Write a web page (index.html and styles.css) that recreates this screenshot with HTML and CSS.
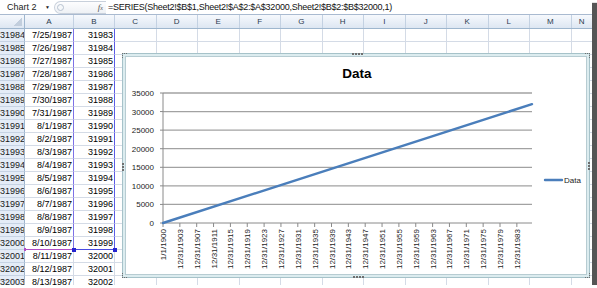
FILE: index.html
```html
<!DOCTYPE html>
<html>
<head>
<meta charset="utf-8">
<link rel="stylesheet" href="styles.css">
</head>
<body>
<div class="app">
  <div class="fbar">
    <div class="namebox"><span class="name">Chart 2</span><span class="dd">▼</span></div>
    <div class="fxbtn"><span class="knob"></span><span class="fx"><i>f</i><span class="fxx">x</span></span></div>
    <div class="formula">=SERIES(Sheet2!$B$1,Sheet2!$A$2:$A$32000,Sheet2!$B$2:$B$32000,1)</div>
  </div>
  <div class="colhdr">
    <div class="corner"><span class="tri"></span></div>
    <div class="ch ca">A</div>
    <div class="ch cb">B</div>
    <div class="ch">C</div>
    <div class="ch">D</div>
    <div class="ch">E</div>
    <div class="ch">F</div>
    <div class="ch">G</div>
    <div class="ch">H</div>
    <div class="ch">I</div>
    <div class="ch">J</div>
    <div class="ch">K</div>
    <div class="ch">L</div>
    <div class="ch">M</div>
    <div class="ch clast">N</div>
  </div>
  <div class="sheet">
    <div class="row in"><div class="rh">31984</div><div class="c a">7/25/1987</div><div class="c b">31983</div><div class="rest"></div></div>
    <div class="row in"><div class="rh">31985</div><div class="c a">7/26/1987</div><div class="c b">31984</div><div class="rest"></div></div>
    <div class="row in"><div class="rh">31986</div><div class="c a">7/27/1987</div><div class="c b">31985</div><div class="rest"></div></div>
    <div class="row in"><div class="rh">31987</div><div class="c a">7/28/1987</div><div class="c b">31986</div><div class="rest"></div></div>
    <div class="row in"><div class="rh">31988</div><div class="c a">7/29/1987</div><div class="c b">31987</div><div class="rest"></div></div>
    <div class="row in"><div class="rh">31989</div><div class="c a">7/30/1987</div><div class="c b">31988</div><div class="rest"></div></div>
    <div class="row in"><div class="rh">31990</div><div class="c a">7/31/1987</div><div class="c b">31989</div><div class="rest"></div></div>
    <div class="row in"><div class="rh">31991</div><div class="c a">8/1/1987</div><div class="c b">31990</div><div class="rest"></div></div>
    <div class="row in"><div class="rh">31992</div><div class="c a">8/2/1987</div><div class="c b">31991</div><div class="rest"></div></div>
    <div class="row in"><div class="rh">31993</div><div class="c a">8/3/1987</div><div class="c b">31992</div><div class="rest"></div></div>
    <div class="row in"><div class="rh">31994</div><div class="c a">8/4/1987</div><div class="c b">31993</div><div class="rest"></div></div>
    <div class="row in"><div class="rh">31995</div><div class="c a">8/5/1987</div><div class="c b">31994</div><div class="rest"></div></div>
    <div class="row in"><div class="rh">31996</div><div class="c a">8/6/1987</div><div class="c b">31995</div><div class="rest"></div></div>
    <div class="row in"><div class="rh">31997</div><div class="c a">8/7/1987</div><div class="c b">31996</div><div class="rest"></div></div>
    <div class="row in"><div class="rh">31998</div><div class="c a">8/8/1987</div><div class="c b">31997</div><div class="rest"></div></div>
    <div class="row in"><div class="rh">31999</div><div class="c a">8/9/1987</div><div class="c b">31998</div><div class="rest"></div></div>
    <div class="row in last"><div class="rh">32000</div><div class="c a">8/10/1987<span class="hd"></span><span class="hd hl"></span></div><div class="c b">31999<span class="hd"></span></div><div class="rest"></div></div>
    <div class="row"><div class="rh">32001</div><div class="c a">8/11/1987</div><div class="c b">32000</div><div class="rest"></div></div>
    <div class="row"><div class="rh">32002</div><div class="c a">8/12/1987</div><div class="c b">32001</div><div class="rest"></div></div>
    <div class="row"><div class="rh">32003</div><div class="c a">8/13/1987</div><div class="c b">32002</div><div class="rest"></div></div>
  </div>

  <div class="chart">
    <div class="plot">
      <svg width="460" height="217" viewBox="0 0 460 217">
        <text class="title" x="231" y="21" text-anchor="middle">Data</text>
        <g class="grid">
          <line x1="37" y1="36" x2="406" y2="36"/>
          <line x1="37" y1="54.57" x2="406" y2="54.57"/>
          <line x1="37" y1="73.14" x2="406" y2="73.14"/>
          <line x1="37" y1="91.71" x2="406" y2="91.71"/>
          <line x1="37" y1="110.29" x2="406" y2="110.29"/>
          <line x1="37" y1="128.86" x2="406" y2="128.86"/>
          <line x1="37" y1="147.43" x2="406" y2="147.43"/>
        </g>
        <g class="axis">
          <line x1="37" y1="36" x2="37" y2="166"/>
          <line x1="37" y1="166" x2="406" y2="166"/>
          <line x1="34" y1="36" x2="37" y2="36"/>
          <line x1="34" y1="54.57" x2="37" y2="54.57"/>
          <line x1="34" y1="73.14" x2="37" y2="73.14"/>
          <line x1="34" y1="91.71" x2="37" y2="91.71"/>
          <line x1="34" y1="110.29" x2="37" y2="110.29"/>
          <line x1="34" y1="128.86" x2="37" y2="128.86"/>
          <line x1="34" y1="147.43" x2="37" y2="147.43"/>
          <line x1="34" y1="166" x2="37" y2="166"/>
          <line x1="37" y1="166" x2="37" y2="170"/>
          <line x1="53.85" y1="166" x2="53.85" y2="170"/>
          <line x1="70.7" y1="166" x2="70.7" y2="170"/>
          <line x1="87.55" y1="166" x2="87.55" y2="170"/>
          <line x1="104.4" y1="166" x2="104.4" y2="170"/>
          <line x1="121.25" y1="166" x2="121.25" y2="170"/>
          <line x1="138.1" y1="166" x2="138.1" y2="170"/>
          <line x1="154.95" y1="166" x2="154.95" y2="170"/>
          <line x1="171.8" y1="166" x2="171.8" y2="170"/>
          <line x1="188.65" y1="166" x2="188.65" y2="170"/>
          <line x1="205.5" y1="166" x2="205.5" y2="170"/>
          <line x1="222.35" y1="166" x2="222.35" y2="170"/>
          <line x1="239.2" y1="166" x2="239.2" y2="170"/>
          <line x1="256.05" y1="166" x2="256.05" y2="170"/>
          <line x1="272.9" y1="166" x2="272.9" y2="170"/>
          <line x1="289.75" y1="166" x2="289.75" y2="170"/>
          <line x1="306.6" y1="166" x2="306.6" y2="170"/>
          <line x1="323.45" y1="166" x2="323.45" y2="170"/>
          <line x1="340.3" y1="166" x2="340.3" y2="170"/>
          <line x1="357.15" y1="166" x2="357.15" y2="170"/>
          <line x1="374" y1="166" x2="374" y2="170"/>
          <line x1="390.85" y1="166" x2="390.85" y2="170"/>
        </g>
        <g class="ylab" text-anchor="end">
          <text x="28" y="39">35000</text>
          <text x="28" y="57.6">30000</text>
          <text x="28" y="76.1">25000</text>
          <text x="28" y="94.7">20000</text>
          <text x="28" y="113.3">15000</text>
          <text x="28" y="131.9">10000</text>
          <text x="28" y="150.4">5000</text>
          <text x="28" y="169">0</text>
        </g>
        <g class="xlab" text-anchor="end">
          <text transform="translate(40,172) rotate(-90)">1/1/1900</text>
          <text transform="translate(56.85,172) rotate(-90)">12/31/1903</text>
          <text transform="translate(73.7,172) rotate(-90)">12/31/1907</text>
          <text transform="translate(90.55,172) rotate(-90)">12/31/1911</text>
          <text transform="translate(107.4,172) rotate(-90)">12/31/1915</text>
          <text transform="translate(124.25,172) rotate(-90)">12/31/1919</text>
          <text transform="translate(141.1,172) rotate(-90)">12/31/1923</text>
          <text transform="translate(157.95,172) rotate(-90)">12/31/1927</text>
          <text transform="translate(174.8,172) rotate(-90)">12/31/1931</text>
          <text transform="translate(191.65,172) rotate(-90)">12/31/1935</text>
          <text transform="translate(208.5,172) rotate(-90)">12/31/1939</text>
          <text transform="translate(225.35,172) rotate(-90)">12/31/1943</text>
          <text transform="translate(242.2,172) rotate(-90)">12/31/1947</text>
          <text transform="translate(259.05,172) rotate(-90)">12/31/1951</text>
          <text transform="translate(275.9,172) rotate(-90)">12/31/1955</text>
          <text transform="translate(292.75,172) rotate(-90)">12/31/1959</text>
          <text transform="translate(309.6,172) rotate(-90)">12/31/1963</text>
          <text transform="translate(326.45,172) rotate(-90)">12/31/1967</text>
          <text transform="translate(343.3,172) rotate(-90)">12/31/1971</text>
          <text transform="translate(360.15,172) rotate(-90)">12/31/1975</text>
          <text transform="translate(377,172) rotate(-90)">12/31/1979</text>
          <text transform="translate(393.85,172) rotate(-90)">12/31/1983</text>
        </g>
        <line class="series" x1="37" y1="166" x2="406" y2="47.15"/>
        <line class="series" x1="419" y1="123" x2="436" y2="123"/>
        <text class="legend" x="438" y="126">Data</text>
      </svg>
    </div>
    <span class="hdl htop"></span>
    <span class="hdl hbot"></span>
    <span class="hdl hleft"></span>
    <span class="hdl hright"></span>
    <span class="crn ctl"></span>
    <span class="crn ctr"></span>
    <span class="crn cbl"></span>
    <span class="crn cbr"></span>
  </div>
</div>
</body>
</html>
```
FILE: styles.css
```css
* { box-sizing: border-box; }
body {
  margin: 0;
  background: #fff;
  font-family: "Liberation Sans", Arial, sans-serif;
}
.app {
  position: relative;
  width: 592px;
  height: 285px;
  overflow: hidden;
  background: #fff;
  box-shadow: 5px 3px 1px #555;
}

/* formula bar */
.fbar {
  display: flex;
  align-items: center;
  height: 15px;
  border-bottom: 1px solid #a9bad0;
  background: #fff;
}
.namebox {
  width: 54px;
  display: flex;
  align-items: center;
  justify-content: space-between;
  padding: 0 4px 0 7px;
  font-size: 9px;
  color: #222;
}
.dd { font-size: 5px; color: #222; }
.fxbtn {
  width: 52px;
  height: 13px;
  border: 1px solid #c8d0db;
  border-right: 0;
  border-radius: 7px 0 0 7px;
  display: flex;
  align-items: center;
  justify-content: space-between;
  padding: 0 3px 0 2px;
  background: linear-gradient(#fdfdfe, #eef1f5);
}
.knob {
  width: 7px;
  height: 7px;
  border-radius: 50%;
  border: 1px solid #b7c2d0;
  background: #f6f8fa;
}
.fx {
  font-family: "Liberation Serif", serif;
  font-size: 9px;
  color: #555;
}
.fxx { font-size: 6px; font-style: italic; }
.formula {
  padding-left: 2px;
  font-size: 9px;
  letter-spacing: -0.25px;
  color: #111;
  white-space: nowrap;
}

/* column headers */
.colhdr {
  display: flex;
  height: 14px;
  background: linear-gradient(#f6f9fd, #dde6f2);
  border-bottom: 1px solid #9eb6ce;
}
.corner {
  flex: 0 0 25px;
  border-right: 1px solid #9eb6ce;
  display: flex;
  align-items: flex-end;
  justify-content: flex-end;
  padding: 0 2px 2px 0;
}
.tri {
  width: 9px;
  height: 9px;
  background: linear-gradient(135deg, transparent 50%, #c2cedd 50%);
}
.ch {
  flex: 0 0 41.5px;
  border-right: 1px solid #c3d1e2;
  display: flex;
  align-items: center;
  justify-content: center;
  font-size: 8px;
  color: #2b3a4f;
}
.ch.ca { flex-basis: 49px; }
.ch.cb { flex-basis: 41px; }
.ch.clast { flex: 1 1 auto; border-right: 0; }

/* rows */
.row {
  display: grid;
  grid-template-columns: 25px 49px 41px 1fr;
  height: 13px;
}
.rh {
  background: #e4ecf7;
  border-right: 1px solid #9eb6ce;
  border-bottom: 1px solid #c6d3e4;
  font-size: 9px;
  line-height: 12px;
  text-align: center;
  color: #1a1a1a;
  white-space: nowrap;
  overflow: hidden;
}
.c {
  position: relative;
  border-right: 1px solid #d4dbe6;
  border-bottom: 1px solid #d4dbe6;
  font-size: 9px;
  line-height: 12px;
  text-align: right;
  padding-right: 1px;
  color: #000;
  white-space: nowrap;
}
.rest {
  border-bottom: 1px solid #d4dbe6;
  background: repeating-linear-gradient(90deg, transparent 0 40.5px, #d4dbe6 40.5px 41.5px);
}
.in .a { border-right-color: #7d72e6; }
.in .b { border-right-color: #5b5be6; }
.last .a { border-bottom-color: #b24dc4; }
.last .b { border-bottom-color: #4a4ae0; }
.hd {
  position: absolute;
  right: -3px;
  bottom: -3px;
  width: 4px;
  height: 4px;
  background: #2424d0;
  z-index: 1;
}
.hd.hl {
  right: auto;
  left: -1px;
  bottom: -2px;
  width: 2px;
  height: 3px;
  background: #b24dc4;
}

/* chart */
.chart {
  position: absolute;
  left: 122px;
  top: 53px;
  width: 468px;
  height: 225px;
  border: 1px solid #a6c2c9;
  padding: 2px;
  background: #dcecef;
}
.plot {
  height: 100%;
  border: 1px solid #b7ccd2;
  background: #fff;
}
.plot svg { display: block; }
.title {
  font-family: "Liberation Sans", Arial, sans-serif;
  font-weight: bold;
  font-size: 13.5px;
  fill: #000;
}
.grid line { stroke: #a2a2a2; stroke-width: 1.3; }
.axis line { stroke: #8a8a8a; stroke-width: 1; }
.ylab text, .xlab text, .legend {
  font-family: "Liberation Sans", Arial, sans-serif;
  font-size: 8px;
  fill: #1c1c1c;
}
.series { stroke: #4a7ebb; stroke-width: 2.4; stroke-linecap: round; }

.hdl {
  position: absolute;
  background: repeating-linear-gradient(90deg, #6f6f6f 0 2px, transparent 2px 3px);
}
.htop { left: 229px; top: -1px; width: 11px; height: 2px; }
.hbot { left: 230px; bottom: -1px; width: 11px; height: 2px; }
.hleft, .hright {
  background: repeating-linear-gradient(180deg, #6f6f6f 0 2px, transparent 2px 3px);
  width: 2px;
  height: 9px;
  top: 109px;
}
.hleft { left: -1px; }
.hright { right: -1px; top: 108px; }
.crn {
  position: absolute;
  width: 5px;
  height: 5px;
  border: 0 dotted #6f6f6f;
}
.ctl { left: -1px; top: -1px; border-top-width: 1px; border-left-width: 1px; }
.ctr { right: -1px; top: -1px; border-top-width: 1px; border-right-width: 1px; }
.cbl { left: -1px; bottom: -1px; border-bottom-width: 1px; border-left-width: 1px; }
.cbr { right: -1px; bottom: -1px; border-bottom-width: 1px; border-right-width: 1px; }
```
